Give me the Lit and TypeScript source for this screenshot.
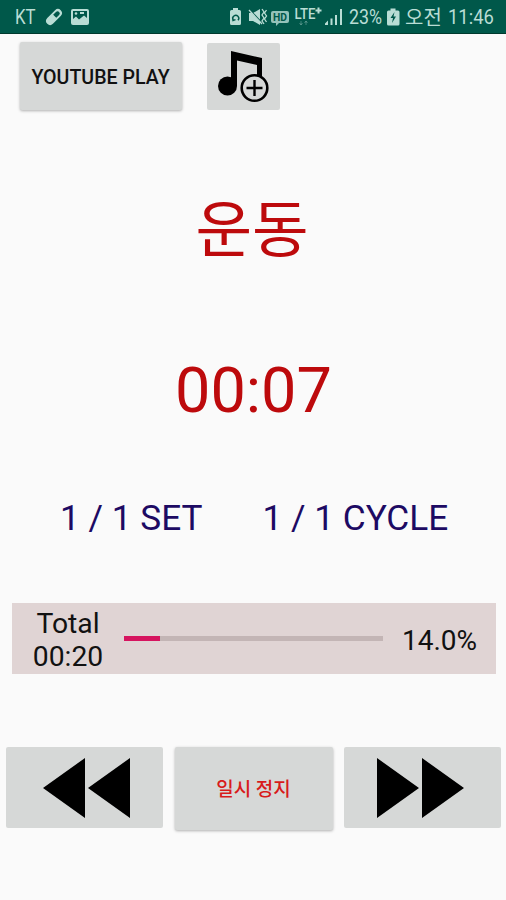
import { LitElement, html, css, svg } from "lit";
import { customElement, property, state } from "lit/decorators.js";

@customElement("status-bar")
class StatusBar extends LitElement {
  static styles = css`
    :host {
      display: flex;
      align-items: center;
      box-sizing: border-box;
      height: 34px;
      padding: 0 12px 0 15px;
      background: #00584a;
      border-bottom: 1px solid #003a2e;
      color: #b9ddd5;
      font-family: Roboto, "Noto Sans CJK KR", sans-serif;
      font-size: 20px;
      line-height: 34px;
      white-space: nowrap;
    }
    svg {
      display: block;
      flex: none;
      fill: #b9ddd5;
    }
    .text {
      flex: none;
      transform: scaleX(0.82);
      transform-origin: left center;
    }
    .carrier { width: 30px; transform: scaleX(0.84); }
    .notices { display: flex; flex: 1; gap: 8px; }
    .percent { width: 38px; margin-left: -15px; padding-top: 1px; transform: scaleX(0.89); }
    .meridiem { width: 43px; transform: none; padding-top: 2px; }
    .clock { width: 46px; padding-top: 1px; transform: scaleX(0.92); }
    .lte {
      font-size: 14px;
      font-weight: 500;
      font-family: Roboto, sans-serif;
    }
    .hd {
      font-size: 10px;
      font-weight: 700;
      font-family: Roboto, sans-serif;
      fill: #00584a;
    }
  `;

  render() {
    return html`
      <span class="text carrier">KT</span>
      <span class="notices">
        <svg width="18" height="18" viewBox="0 0 18 18">
          <g transform="rotate(-45 9 9)">
            <rect x="-0.500" y="5" width="19" height="8" rx="4"></rect>
            <path d="M10 6.800h4a2.200 2.200 0 0 1 0 4.400H10z" fill="#00584a"></path>
          </g>
        </svg>
        <svg width="18" height="18" viewBox="0 0 18 18">
          <path fill-rule="evenodd" d="M2 1h14a2 2 0 0 1 2 2v12a2 2 0 0 1-2 2H2a2 2 0 0 1-2-2V3a2 2 0 0 1 2-2zM2 3v8l3-2.500 3 3 5-4 3 2.500V3z"></path>
          <circle cx="5" cy="5.500" r="1.300"></circle>
          <path d="M9 4h4v2H9z"></path>
        </svg>
      </span>
      <svg width="136" height="26" viewBox="0 0 136 26">
        <path d="M5 6V4h5v2h1.500a1.500 1.500 0 0 1 1.500 1.500v12a1.500 1.500 0 0 1-1.500 1.500h-8A1.500 1.500 0 0 1 2 19.500v-12A1.500 1.500 0 0 1 3.500 6z"></path>
        <path d="M5.300 16a3 3 0 1 1 4.700.300M4.500 13.500l.500 3 2.500-.800" fill="none" stroke="#00584a" stroke-width="1.400"></path>
        <path d="M21 9h4l7-4v16l-7-4h-4z"></path>
        <path d="M20 4l14 15" stroke="#00584a" stroke-width="1.500"></path>
        <path d="M21 6l13 14M34 5l2 3-2 3 2 3-2 3 2 3M38.500 6l-2 3 2 3-2 3 2 3" stroke="#b9ddd5" stroke-width="1.300" fill="none"></path>
        <path d="M45 7h14a2 2 0 0 1 2 2v8a2 2 0 0 1-2 2h-8l-3 3v-3h-3a2 2 0 0 1-2-2V9a2 2 0 0 1 2-2z" opacity="0.8"></path>
        <text class="hd" x="45" y="16.700" textLength="14" lengthAdjust="spacingAndGlyphs">HD</text>
        <text class="lte" x="66.500" y="14.500" textLength="21" lengthAdjust="spacingAndGlyphs">LTE</text>
        <path d="M87.500 6.500h6M90.500 3.500v6" stroke="#b9ddd5" stroke-width="2"></path>
        <path d="M73 17v4M71.500 19l1.500 2 1.500-2M78 21v-4M76.500 19l1.500-2 1.500 2" stroke="#b9ddd5" stroke-width="1" fill="none" opacity="0.35"></path>
        <path d="M97 21v-1.500l3-3V21zM102.500 21v-6.500h2V21zM107 21V11h2v10zM112 21V5h2v16z"></path>
      </svg>
      <span class="text percent">23%</span>
      <svg width="18" height="22" viewBox="0 0 18 22">
        <path d="M3.500 4.500V2.500h5v2h2.500a1.500 1.500 0 0 1 1.500 1.500v12a1.500 1.500 0 0 1-1.500 1.500H1.500A1.500 1.500 0 0 1 0 18V6a1.500 1.500 0 0 1 1.500-1.500z"></path>
        <path d="M7.500 6L3.500 12h2.500L5 17 9 10.500H6.500z" fill="#00584a"></path>
      </svg>
      <span class="text meridiem">오전</span>
      <span class="text clock">11:46</span>
    `;
  }
}

@customElement("app-root")
class AppRoot extends LitElement {
  @property({ type: Number }) progress = 14;
  @state() private remaining = "00:07";

  static styles = css`
    :host {
      display: flex;
      flex-direction: column;
      height: 900px;
      background: #fafafa;
      font-family: Roboto, "Noto Sans CJK KR", sans-serif;
      color: #111;
      white-space: nowrap;
    }
    .toolbar {
      display: flex;
      align-items: flex-start;
      gap: 25px;
      height: 68px;
      padding: 8px 20px 0;
    }
    button {
      display: flex;
      align-items: center;
      justify-content: center;
      margin: 0;
      padding: 0;
      border: 0;
      border-radius: 2px;
      background: #d6d8d7;
      font-family: inherit;
      color: #111;
    }
    svg { display: block; }
    .raised { box-shadow: 0 1px 3px rgba(0, 0, 0, 0.3); }
    .youtube {
      box-sizing: border-box;
      width: 162px;
      height: 68px;
      padding: 2px 1px 0 0;
      font-size: 19.600px;
      font-weight: 500;
    }
    .music { width: 73px; height: 67px; margin-top: 1px; }
    .phase {
      display: flex;
      align-items: center;
      justify-content: center;
      height: 238px;
      box-sizing: border-box;
      padding: 3px 2px 0 0;
      font-size: 61.500px;
      line-height: 70px;
      color: #bd0a0c;
    }
    .time {
      display: flex;
      align-items: center;
      justify-content: center;
      height: 84px;
      padding-left: 1px;
      font-size: 63px;
      color: #bd0a0c;
    }
    .counts {
      display: flex;
      align-items: center;
      gap: 60px;
      height: 171px;
      padding-left: 60px;
      font-size: 35.200px;
      color: #1d0a63;
    }
    .total {
      display: flex;
      align-items: center;
      box-sizing: border-box;
      height: 71px;
      margin: 0 10px 0 12px;
      background: #e0d4d4;
      font-size: 28.300px;
    }
    .label {
      width: 112px;
      padding-top: 3px;
      line-height: 33px;
      text-align: center;
    }
    .track {
      width: 259px;
      height: 5px;
      background: #c3b5b5;
    }
    .fill { height: 100%; background: #d6145f; }
    .value { margin-left: 19px; padding-top: 3px; font-size: 28px; }
    .controls {
      display: grid;
      grid-template-columns: 157px 158px 157px;
      column-gap: 11.500px;
      margin: 73px 5px 0 6px;
    }
    .controls button { height: 81px; }
    .controls .previous { padding-left: 4px; }
    .controls .next { padding-right: 4px; }
    .controls .pause {
      box-sizing: border-box;
      height: 83px;
      padding-bottom: 2px;
      font-size: 19px;
      font-weight: 500;
      color: #d81b1b;
    }
  `;

  private arrows(flip: boolean) {
    const shape = svg`<path d="M0 30L42 0V60zM45 30L87 0V60z" transform=${flip ? "matrix(-1 0 0 1 87 0)" : ""}></path>`;
    return html`<svg width="87" height="60" viewBox="0 0 87 60">${shape}</svg>`;
  }

  render() {
    return html`
      <status-bar></status-bar>
      <div class="toolbar">
        <button class="youtube raised">YOUTUBE PLAY</button>
        <button class="music" aria-label="Add music">
          <svg width="73" height="67" viewBox="0 0 73 67">
            <circle cx="20.500" cy="43" r="9.500"></circle>
            <path d="M24 8l31 7v18h-5V22l-20-4.500V43h-6z"></path>
            <circle cx="47.500" cy="45" r="12.800" fill="#d6d8d7" stroke="#000" stroke-width="2.600"></circle>
            <path d="M39.500 45h16M47.500 37v16" stroke="#000" stroke-width="2.400"></path>
          </svg>
        </button>
      </div>
      <div class="phase">운동</div>
      <div class="time">${this.remaining}</div>
      <div class="counts"><span>1 / 1 SET</span><span>1 / 1 CYCLE</span></div>
      <div class="total">
        <div class="label">Total<br />00:20</div>
        <div class="track"><div class="fill" style="width:${this.progress}%"></div></div>
        <div class="value">${this.progress.toFixed(1)}%</div>
      </div>
      <div class="controls">
        <button class="previous" aria-label="Previous">${this.arrows(false)}</button>
        <button class="pause raised">일시 정지</button>
        <button class="next" aria-label="Next">${this.arrows(true)}</button>
      </div>
    `;
  }
}
